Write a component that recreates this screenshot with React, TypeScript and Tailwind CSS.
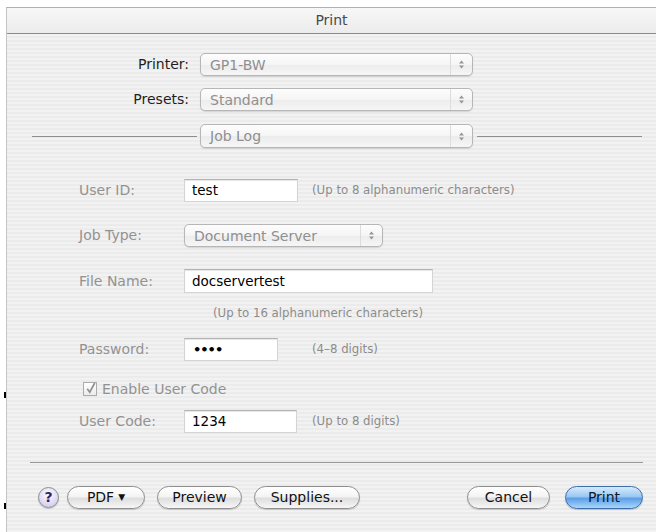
import React from "react";

const font = "font-['DejaVu_Sans','Liberation_Sans',sans-serif]";

function Arrows() {
  return (
    <svg width="7" height="11" viewBox="0 0 7 11">
      <path d="M3.5 1.5 L6 4.5 L1 4.5 Z" fill="#959595" />
      <path d="M1 6.5 L6 6.5 L3.5 9.5 Z" fill="#959595" />
    </svg>
  );
}

function Popup({ label, className }: { label: string; className: string }) {
  return (
    <div
      className={`flex items-center rounded-[5px] border border-[#b6b6b6] bg-[linear-gradient(to_bottom,#fdfdfd,#f5f5f5_50%,#ececec_52%,#f6f6f6)] shadow-[0_1px_1px_rgba(0,0,0,0.12)] ${className}`}
    >
      <span className="flex-1 pl-[9px] text-[14px] text-[#8f8f8f] leading-none">{label}</span>
      <div className="flex h-full w-[22px] items-center justify-center border-l border-[#dcdcdc]">
        <Arrows />
      </div>
    </div>
  );
}

function Field({ value, className }: { value: React.ReactNode; className: string }) {
  return (
    <div
      className={`flex items-center bg-white border border-[#d4d4d4] border-t-[#b2b2b2] shadow-[inset_0_1px_1px_rgba(0,0,0,0.1)] pl-[7px] text-[13.5px] text-black ${className}`}
    >
      {value}
    </div>
  );
}

function Hint({ children, className = "" }: { children: React.ReactNode; className?: string }) {
  return <span className={`text-[11.75px] text-[#8c8c8c] whitespace-nowrap ${className}`}>{children}</span>;
}

function Label({ children }: { children: React.ReactNode }) {
  return <div className="w-[105px] shrink-0 text-[14px] text-[#929292]">{children}</div>;
}

function AquaButton({ children, className }: { children: React.ReactNode; className: string }) {
  return (
    <div
      className={`flex h-[23px] items-center justify-center rounded-full border border-[#8e8e8e] bg-[linear-gradient(to_bottom,#ffffff,#f4f4f4_45%,#dedede_55%,#f7f7f7)] shadow-[0_1px_1px_rgba(0,0,0,0.18)] text-[14px] text-[#111] ${className}`}
    >
      {children}
    </div>
  );
}

export default function App() {
  return (
    <div className={`relative w-[656px] h-[532px] overflow-hidden bg-white ${font}`}>
      <div className="ml-[6px] mt-[7px] flex h-[525px] flex-col border-l border-t border-l-[#c4c4c4] border-t-[#9fb6bd]">
        {/* title bar */}
        <div className="flex h-[26px] shrink-0 items-center justify-center border-b border-[#8a8a8a] bg-[linear-gradient(to_bottom,#f7f7f7,#ececec)] text-[14px] text-[#4a4a4a]">
          Print
        </div>

        {/* sheet body */}
        <div className="flex-1 bg-[repeating-linear-gradient(to_bottom,#f2f2f2_0px,#f2f2f2_2px,#ebebeb_2px,#ebebeb_4px)]">
          <div className="mt-[19px] flex items-center">
            <div className="w-[182px] text-right text-[14px] text-[#1e1e1e]">Printer:</div>
            <Popup label="GP1-BW" className="ml-[11px] h-[23px] w-[273px]" />
          </div>
          <div className="mt-[12px] flex items-center">
            <div className="w-[182px] text-right text-[14px] text-[#1e1e1e]">Presets:</div>
            <Popup label="Standard" className="ml-[11px] h-[23px] w-[273px]" />
          </div>

          <div className="mt-[13px] flex items-center">
            <div className="ml-[25px] h-px w-[165px] bg-[#8e8e8e]" />
            <Popup label="Job Log" className="ml-[3px] h-[24px] w-[273px]" />
            <div className="ml-[4px] h-px w-[165px] bg-[#8e8e8e]" />
          </div>

          {/* job log options */}
          <div className="pl-[72px]">
            <div className="mt-[31px] flex items-center">
              <Label>User ID:</Label>
              <Field value="test" className="h-[23px] w-[114px]" />
              <Hint className="ml-[14px]">(Up to 8 alphanumeric characters)</Hint>
            </div>

            <div className="mt-[22px] flex items-center">
              <Label>Job Type:</Label>
              <Popup label="Document Server" className="h-[23px] w-[199px]" />
            </div>

            <div className="mt-[22px] flex items-center">
              <Label>File Name:</Label>
              <Field value="docservertest" className="h-[24px] w-[249px]" />
            </div>
            <div className="mt-[14px] flex h-[14px] items-center pl-[134px]">
              <Hint>(Up to 16 alphanumeric characters)</Hint>
            </div>

            <div className="mt-[17px] flex items-center">
              <Label>Password:</Label>
              <Field
                value={<span className="pl-[1px] text-[13px] font-bold tracking-[-1px] leading-none">••••</span>}
                className="h-[23px] w-[94px]"
              />
              <Hint className="ml-[34px]">(4–8 digits)</Hint>
            </div>

            <div className="mt-[20px] flex h-[16px] items-center pl-[4px]">
              <div className="flex h-[14px] w-[14px] items-center justify-center border border-[#ababab] bg-[linear-gradient(to_bottom,#ffffff,#ececec)]">
                <svg width="12" height="14" viewBox="0 0 12 14" className="-mt-[3px] ml-[2px]">
                  <path d="M1.5 8 L4.5 12 L10.5 1" stroke="#8f8f8f" strokeWidth="2" fill="none" />
                </svg>
              </div>
              <span className="ml-[5px] text-[14px] text-[#929292]">Enable User Code</span>
            </div>

            <div className="mt-[13px] flex items-center">
              <Label>User Code:</Label>
              <Field value="1234" className="h-[23px] w-[113px]" />
              <Hint className="ml-[15px]">(Up to 8 digits)</Hint>
            </div>
          </div>

          <div className="ml-[23px] mt-[29px] h-px w-[613px] bg-[#979797]" />

          {/* buttons */}
          <div className="mt-[23px] flex items-center">
            <div className="ml-[31px] flex h-[21px] w-[21px] items-center justify-center rounded-full border border-[#8c8c8c] bg-[radial-gradient(circle_at_50%_35%,#ffffff,#d6cff0_75%)] shadow-[0_1px_1px_rgba(0,0,0,0.2)] text-[14px] font-bold text-[#2c2466]">
              ?
            </div>
            <AquaButton className="ml-[8px] w-[78px]">
              PDF <span className="ml-[4px] text-[9px]">▼</span>
            </AquaButton>
            <AquaButton className="ml-[12px] w-[85px]">Preview</AquaButton>
            <AquaButton className="ml-[12px] w-[106px]">Supplies...</AquaButton>
            <AquaButton className="ml-[107px] w-[83px]">Cancel</AquaButton>
            <div className="ml-[15px] flex h-[23px] w-[78px] items-center justify-center rounded-full border border-[#3e6ea8] bg-[linear-gradient(to_bottom,#d6eafc,#9cc8f2_45%,#5d9fe7_55%,#a9d6fb)] shadow-[0_1px_1px_rgba(0,0,0,0.2)] text-[14px] text-[#0e1a2a]">
              Print
            </div>
          </div>
        </div>
      </div>

      {/* stray edge marks */}
      <div className="absolute left-[4px] top-[392px] h-[6px] w-[2px] bg-black" />
      <div className="absolute left-[4px] top-[503px] h-[6px] w-[2px] bg-black" />
    </div>
  );
}
